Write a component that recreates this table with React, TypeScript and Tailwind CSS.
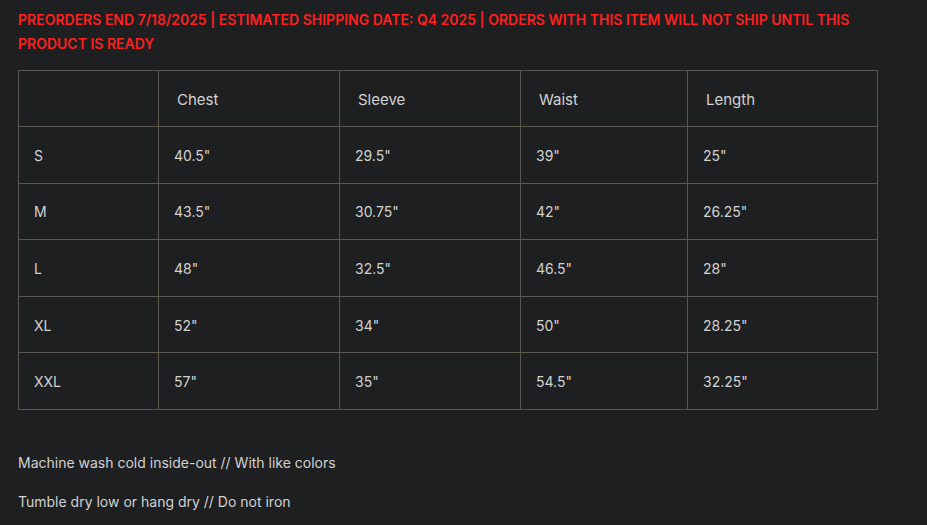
const HEADERS = ["", "Chest", "Sleeve", "Waist", "Length"];

const ROWS = [
  ["S", '40.5"', '29.5"', '39"', '25"'],
  ["M", '43.5"', '30.75"', '42"', '26.25"'],
  ["L", '48"', '32.5"', '46.5"', '28"'],
  ["XL", '52"', '34"', '50"', '28.25"'],
  ["XXL", '57"', '35"', '54.5"', '32.25"'],
];

const COL_WIDTHS = ["w-[140px]", "w-[181px]", "w-[181px]", "w-[167px]", "w-[190px]"];

export default function App() {
  return (
    <div className="min-h-[525px] bg-[#1e1f21] px-[18px] pt-[8px] text-[#d2d2d2] font-['Inter','Liberation_Sans',sans-serif]">
      <p className="text-[14px] leading-[24px] font-semibold text-[#ff1f1f]">
        PREORDERS END 7/18/2025 | ESTIMATED SHIPPING DATE: Q4 2025 | ORDERS WITH THIS ITEM WILL NOT SHIP UNTIL THIS PRODUCT IS READY
      </p>

      <table className="mt-[14px] w-[860px] border-collapse table-fixed text-[14px]">
        <colgroup>
          {COL_WIDTHS.map((w, i) => (
            <col key={i} className={w} />
          ))}
        </colgroup>
        <thead>
          <tr className="h-[56px]">
            {HEADERS.map((h, i) => (
              <th
                key={i}
                className="border border-[#5b5850] pl-[18px] pt-[3px] text-left font-normal text-[15px]"
              >
                {h}
              </th>
            ))}
          </tr>
        </thead>
        <tbody>
          {ROWS.map((row) => (
            <tr key={row[0]} className="h-[56.6px]">
              {row.map((cell, i) => (
                <td key={i} className="border border-[#5b5850] pl-[15px] pt-[1px]">
                  {cell}
                </td>
              ))}
            </tr>
          ))}
        </tbody>
      </table>

      <div className="mt-[41px] space-y-[15px] text-[14px] leading-[24px]">
        <p>Machine wash cold inside-out // With like colors</p>
        <p>Tumble dry low or hang dry // Do not iron</p>
      </div>
    </div>
  );
}
